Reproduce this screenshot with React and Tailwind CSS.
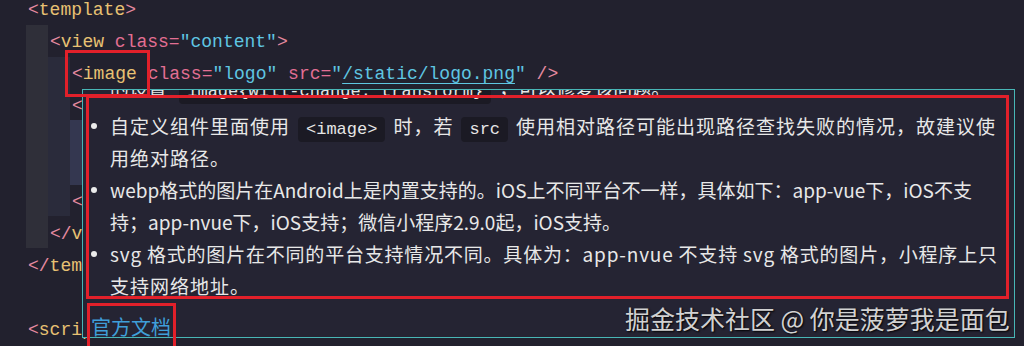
import React from "react";

const mono = { fontFamily: '"Liberation Mono", "DejaVu Sans Mono", monospace' };
const sans = { fontFamily: '"Noto Sans CJK SC", "Noto Sans", sans-serif' };

const B = ({ children }) => <span className="text-[#e58aa0]">{children}</span>;
const T = ({ children }) => <span className="text-[#e8c173]">{children}</span>;
const A = ({ children }) => <span className="text-[#e36f93]">{children}</span>;
const S = ({ children }) => <span className="text-[#5fc6e2]">{children}</span>;

function CodeLine({ indent = 0, children }) {
  const pad = ["pl-[28px]", "pl-[50px]", "pl-[72px]", "pl-[94px]"][indent];
  return <div className={`h-[32px] leading-[32px] whitespace-pre ${pad}`}>{children}</div>;
}

function Code({ children }) {
  return (
    <span
      style={mono}
      className="inline-block rounded bg-[#1b1a24] px-2 text-[17px] leading-[25px] tracking-normal text-[#e6e6e6] mx-2"
    >
      {children}
    </span>
  );
}

function Item({ lines, track = [] }) {
  return (
    <div className="flex">
      <div className="w-[19px] h-[32px] shrink-0 flex items-center">
        <span className="w-[6px] h-[6px] rounded-full bg-[#ececec]" />
      </div>
      <div>
        {lines.map((l, i) => (
          <div key={i} className={`h-[32px] leading-[32px] whitespace-nowrap ${track[i] || ""}`}>
            {l}
          </div>
        ))}
      </div>
    </div>
  );
}

export default function App() {
  return (
    <div className="relative w-[1024px] h-[346px] overflow-hidden bg-[#22212e]">
      {/* indent guides */}
      <div className="absolute left-[26px] top-[25px] w-[22px] h-[223px] bg-[#2f2f39]" />
      <div className="absolute left-[48px] top-[57px] w-[22px] h-[159px] bg-[#2a2b3b]" />
      <div className="absolute left-[70px] top-[120px] w-[22px] h-[65px] bg-[#343750]" />

      {/* code */}
      <div style={mono} className="relative -mt-[6px] text-[18px]">
        <CodeLine>
          <B>&lt;</B><T>template</T><B>&gt;</B>
        </CodeLine>
        <CodeLine indent={1}>
          <B>&lt;</B><T>view</T> <A>class</A><A>=</A><S>"content"</S><B>&gt;</B>
        </CodeLine>
        <CodeLine indent={2}>
          <B>&lt;</B><T>image</T> <A>class</A><A>=</A><S>"logo"</S> <A>src</A><A>=</A>
          <S>"</S><span className="text-[#5fc6e2] underline underline-offset-4">/static/logo.png</span><S>"</S> <B>/&gt;</B>
        </CodeLine>
        <CodeLine indent={2}>
          <B>&lt;</B><T>view</T> <A>class</A><A>=</A><S>"text-area"</S><B>&gt;</B>
        </CodeLine>
        <CodeLine indent={3}>
          <B>&lt;</B><T>text</T> <A>class</A><A>=</A><S>"title"</S><B>&gt;</B>
        </CodeLine>
        <CodeLine indent={3}>
          <B>&lt;/</B><T>text</T><B>&gt;</B>
        </CodeLine>
        <CodeLine indent={2}>
          <B>&lt;/</B><T>view</T><B>&gt;</B>
        </CodeLine>
        <CodeLine indent={1}>
          <B>&lt;/</B><T>view</T><B>&gt;</B>
        </CodeLine>
        <CodeLine>
          <B>&lt;/</B><T>template</T><B>&gt;</B>
        </CodeLine>
        <CodeLine> </CodeLine>
        <CodeLine>
          <B>&lt;</B><T>script</T><B>&gt;</B>
        </CodeLine>
      </div>

      {/* hover tooltip */}
      <div
        style={sans}
        className="absolute left-[82px] top-[89px] w-[933px] h-[249px] overflow-hidden border border-[#48b6b6] bg-[#252433] text-[19px] text-[#e8e8e8]"
      >
        <div className="-mt-[18px] pl-[8px]">
          <div className="h-[32px] leading-[32px] pl-[19px] whitespace-nowrap">
            的设置 <Code>image{"{will-change: transform}"}</Code>，可以修复该问题。
          </div>
          <div className="mt-[6px]">
            <Item
              track={["tracking-[1px]", "tracking-[1px]"]}
              lines={[
                <>
                  自定义组件里面使用<Code>&lt;image&gt;</Code>时，若<Code>src</Code>使用相对路径可能出现路径查找失败的情况，故建议使
                </>,
                "用绝对路径。",
              ]}
            />
            <Item
              lines={[
                "webp格式的图片在Android上是内置支持的。iOS上不同平台不一样，具体如下：app-vue下，iOS不支",
                "持；app-nvue下，iOS支持；微信小程序2.9.0起，iOS支持。",
              ]}
            />
            <Item
              track={["tracking-[0.8px]", "tracking-[1px]"]}
              lines={[
                "svg 格式的图片在不同的平台支持情况不同。具体为：app-nvue 不支持 svg 格式的图片，小程序上只",
                "支持网络地址。",
              ]}
            />
          </div>
          <div className="mt-[9px] leading-[32px] text-[20px] text-[#3f9fd9]">官方文档</div>
        </div>
      </div>

      {/* annotation boxes */}
      <div className="absolute left-[65px] top-[50px] w-[85px] h-[47px] border-[3px] border-[#e2202a]" />
      <div className="absolute left-[86px] top-[95px] w-[923px] h-[204px] border-[3px] border-[#e2202a]" />
      <div className="absolute left-[87px] top-[303px] w-[89px] h-[50px] border-[3px] border-[#e2202a]" />

      {/* watermark */}
      <div
        style={sans}
        className="absolute left-[625px] top-[300px] text-[25px] leading-[36px] text-[#d2d2d2] [text-shadow:1px_1px_2px_#000]"
      >
        掘金技术社区 @ 你是菠萝我是面包
      </div>
    </div>
  );
}
